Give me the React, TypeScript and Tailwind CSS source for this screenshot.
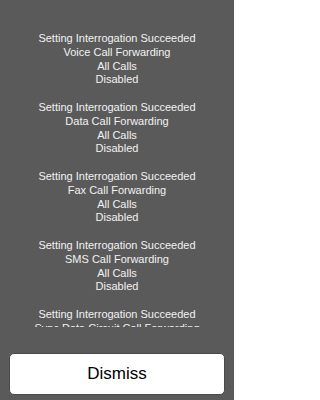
const services = [
  "Voice Call Forwarding",
  "Data Call Forwarding",
  "Fax Call Forwarding",
  "SMS Call Forwarding",
  "Sync Data Circuit Call Forwarding",
];

export default function App() {
  return (
    <div className="flex h-[400px] w-[234px] flex-col bg-[#5a5a5a] font-['Liberation_Sans',Arial,sans-serif]">
      <div className="h-[327px] overflow-hidden pt-[32px] text-center text-[11px] leading-[13.8px] text-[#f2f2f2]">
        {services.map((service) => (
          <div key={service} className="pb-[13.8px]">
            <p>Setting Interrogation Succeeded</p>
            <p>{service}</p>
            <p>All Calls</p>
            <p>Disabled</p>
          </div>
        ))}
      </div>
      <button
        className="mx-[9px] mt-[26px] h-[42px] rounded-[5px] border border-[#4a4a4a] bg-white text-[17px] text-black"
        type="button"
      >
        Dismiss
      </button>
    </div>
  );
}
